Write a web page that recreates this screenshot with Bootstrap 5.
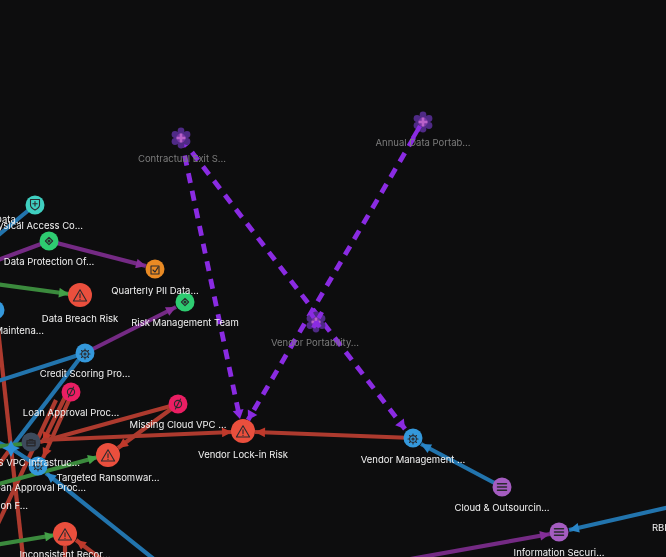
<!doctype html>
<html lang="en">
<head>
<meta charset="utf-8">
<title>Graph</title>
<link href="https://cdn.jsdelivr.net/npm/bootstrap@5.3.0/dist/css/bootstrap.min.css" rel="stylesheet">
<style>
html,body{height:100%;margin:0;background:#0d0d0e;overflow:hidden}
.graph-canvas{display:block;width:666px;height:557px;filter:blur(.5px)}
.graph-canvas text{font-family:Inter,"Liberation Sans",sans-serif;font-size:9.5px;font-weight:400;fill:#f2f2f2;text-anchor:middle}
.graph-canvas text.lab-dim{fill:#7c7c7c}
.graph-canvas text.lab-start{text-anchor:start}
.graph-canvas text.lab-end{text-anchor:end}
.ed{fill:none;stroke-width:4.2}
.ed-red{stroke:#ad3a2e}
.ed-blue{stroke:#2274ad}
.ed-green{stroke:#3b8a3d}
.ed-pur{stroke:#742a84}
.ed-dash{stroke:#8a2be2;stroke-width:4.8;stroke-dasharray:10 8}
.ico{fill:none;stroke:#2a2a2e;stroke-width:1.1;stroke-linejoin:round;stroke-linecap:round}
.n-red{fill:#ea4f3d}.n-blue{fill:#3498db}.n-pur{fill:#a45cc0}.n-pink{fill:#ea1e63}
.n-org{fill:#e98a24}.n-grn{fill:#2ecc71}.n-teal{fill:#3fcfc0}.n-dark{fill:#3d4a5c}
</style>
</head>
<body>
<main class="d-flex w-100 h-100 overflow-hidden">
<svg class="graph-canvas flex-shrink-0" viewBox="0 0 666 557" role="img" aria-label="Risk graph">
<defs>
<marker id="a-red" markerUnits="userSpaceOnUse" markerWidth="12" markerHeight="10" refX="11" refY="5" orient="auto"><path d="M1 .2 11 5 1 9.8z" fill="#c0392b"/></marker>
<marker id="a-blue" markerUnits="userSpaceOnUse" markerWidth="12" markerHeight="10" refX="11" refY="5" orient="auto"><path d="M1 .2 11 5 1 9.8z" fill="#2a86c8"/></marker>
<marker id="a-green" markerUnits="userSpaceOnUse" markerWidth="12" markerHeight="10" refX="11" refY="5" orient="auto"><path d="M1 .2 11 5 1 9.8z" fill="#43a047"/></marker>
<marker id="a-pur" markerUnits="userSpaceOnUse" markerWidth="12" markerHeight="10" refX="11" refY="5" orient="auto"><path d="M1 .2 11 5 1 9.8z" fill="#842e98"/></marker>
<marker id="a-dash" markerUnits="userSpaceOnUse" markerWidth="11" markerHeight="12" refX="10" refY="6" orient="auto"><path d="M1 .5 10 6 1 11.5z" fill="#8a2be2"/></marker>
<g id="i-warn" class="ico"><path d="M0-6.2 6.6 5H-6.6z"/><path d="M0-2.2V1.6M0 3.2V3.4"/></g>
<g id="i-gear" class="ico"><circle r="3.4"/><circle r="1"/><path d="M0-5V-3.6M0 5V3.6M-5 0H-3.6M5 0H3.6M-3.5-3.5-2.5-2.5M3.5-3.5 2.5-2.5M-3.5 3.5-2.5 2.5M3.5 3.5 2.5 2.5"/></g>
<g id="i-list" class="ico" style="stroke-width:1.5"><path d="M-4.5-3.2H4.5M-4.5 0H4.5M-4.5 3.2H4.5"/></g>
<g id="i-dia" class="ico"><path d="M0-3.6 3.6 0 0 3.6-3.6 0z" fill="none"/><circle r="1" fill="#2a2a2e"/></g>
<g id="i-chk" class="ico"><rect x="-4" y="-4" width="8" height="8"/><path d="M-2 0 0 2 3-2.6"/></g>
<g id="i-shield" class="ico"><path d="M-4.5-4.5H4.5V1C4.5 3.5 2 5 0 6-2 5-4.5 3.5-4.5 1z"/><path d="M0-2.5V2M-2.2-.3H2.2"/></g>
<g id="i-null" class="ico"><circle r="3.6"/><path d="M-2.6 5 2.6-5"/></g>
<g id="i-case" class="ico" style="stroke-width:1.4"><rect x="-4" y="-2.2" width="8" height="5"/><path d="M-1.5-2.2V-3.4H1.5V-2.2M-4 0H4"/></g>
<g id="i-flower">
<g fill="#4f2a86"><circle cy="-7" r="3.4"/><circle cx="6" cy="-3.5" r="3.4"/><circle cx="6" cy="3.5" r="3.4"/><circle cy="7" r="3.4"/><circle cx="-6" cy="3.5" r="3.4"/><circle cx="-6" cy="-3.5" r="3.4"/><circle r="7"/></g>
<circle r="4.5" fill="#8f3fb8" opacity=".6"/>
<path d="M0-4.5V4.5M-4.5 0H4.5" stroke="#c56ad0" stroke-width="2.6" opacity=".85"/>
</g>
</defs>

<!-- edges -->
<path class="ed ed-blue" d="M-5 238 30 209"/>
<path class="ed ed-pur" d="M-5 261 49 241"/>
<path class="ed ed-pur" d="M49 241 146 266" marker-end="url(#a-pur)"/>
<path class="ed ed-green" d="M-5 284 69 294" marker-end="url(#a-green)"/>
<path class="ed ed-red" d="M-3 320 23 557"/>
<path class="ed ed-blue" d="M85 353-5 382"/>
<path class="ed ed-pur" d="M85 353 176 307" marker-end="url(#a-pur)"/>
<path class="ed ed-blue" d="M80 358 11 448"/>
<path class="ed ed-red" d="M66 395 43 442" marker-end="url(#a-red)"/>
<path class="ed ed-red" d="M70 398 43 458" marker-end="url(#a-red)"/>
<path class="ed ed-red" d="M56 400-5 530"/>
<path class="ed ed-red" d="M178 404 40 442" marker-end="url(#a-red)"/>
<path class="ed ed-red" d="M178 404 118 448" marker-end="url(#a-red)"/>
<path class="ed ed-red" d="M42 440 232 432" marker-end="url(#a-red)"/>
<path class="ed ed-red" d="M413 438 255 432" marker-end="url(#a-red)"/>
<path class="ed ed-blue" d="M155 560 46 473" marker-end="url(#a-blue)"/>
<path class="ed ed-green" d="M-5 485 98 457" marker-end="url(#a-green)"/>
<path class="ed ed-green" d="M-5 545 55 535" marker-end="url(#a-green)"/>
<path class="ed ed-red" d="M105 562 76 540" marker-end="url(#a-red)"/>
<path class="ed ed-red" d="M65 560V546"/>
<path class="ed ed-blue" d="M-5 441 12 449 38 466"/>
<path class="ed ed-green" d="M-5 447 22 444"/>
<path class="ed ed-red" d="M-5 470 11 448"/>
<path d="M11 440 14 446 20 448 14 451 11 457 8 451 2 448 8 446z" fill="#2f8fd6"/>
<path class="ed ed-blue" d="M502 487 421 444" marker-end="url(#a-blue)"/>
<path class="ed ed-blue" d="M670 507 569 530" marker-end="url(#a-blue)"/>
<path class="ed ed-pur" d="M405 560 550 534" marker-end="url(#a-pur)"/>
<path class="ed ed-dash" d="M181 138 240 419" marker-end="url(#a-dash)"/>
<path class="ed ed-dash" d="M423 122 248 420" marker-end="url(#a-dash)"/>
<path class="ed ed-dash" d="M181 138 405 429" marker-end="url(#a-dash)"/>

<!-- nodes -->
<use href="#i-flower" x="181" y="138"/>
<use href="#i-flower" x="423" y="122"/>
<use href="#i-flower" x="316" y="322"/>
<path d="M310 312 321 329M322 312 312 330" stroke="#8a2be2" stroke-width="4.4" stroke-dasharray="7 4" fill="none"/>
<path d="M420 126 413 138" stroke="#8a2be2" stroke-width="4.4" fill="none"/>

<circle class="n-teal" cx="35" cy="205" r="9.5"/><use href="#i-shield" x="35" y="204"/>
<circle class="n-grn" cx="49" cy="241" r="9.5"/><use href="#i-dia" x="49" y="241"/>
<circle class="n-org" cx="155" cy="269" r="9.5"/><use href="#i-chk" x="155" y="270"/>
<circle class="n-grn" cx="185" cy="302" r="9.5"/><use href="#i-dia" x="185" y="302"/>
<circle class="n-red" cx="80" cy="295" r="12"/><use href="#i-warn" x="80" y="296"/>
<circle class="n-blue" cx="-5" cy="310" r="9.5"/>
<circle class="n-blue" cx="85" cy="353" r="9.5"/><use href="#i-gear" x="85" y="354"/>
<circle class="n-pink" cx="71" cy="392" r="9.5"/><use href="#i-null" x="71" y="392"/>
<circle class="n-pink" cx="178" cy="404" r="9.5"/><use href="#i-null" x="178" y="404"/>
<circle class="n-dark" cx="31" cy="442" r="9.5"/><use href="#i-case" x="31" y="443"/>
<circle class="n-blue" cx="38" cy="466" r="9.5"/><use href="#i-gear" x="38" y="466"/>
<circle class="n-red" cx="108" cy="455" r="12"/><use href="#i-warn" x="108" y="456"/>
<circle class="n-red" cx="65" cy="534" r="12"/><use href="#i-warn" x="65" y="535"/>
<circle class="n-red" cx="243" cy="431" r="12"/><use href="#i-warn" x="243" y="432"/>
<circle class="n-blue" cx="413" cy="438" r="9.5"/><use href="#i-gear" x="413" y="439"/>
<circle class="n-pur" cx="502" cy="487" r="9.5"/><use href="#i-list" x="502" y="487"/>
<circle class="n-pur" cx="559" cy="532" r="9.5"/><use href="#i-list" x="559" y="532"/>

<!-- labels -->
<text class="lab-dim" x="182" y="162">Contractual Exit S...</text>
<text class="lab-dim" x="423" y="146">Annual Data Portab...</text>
<text class="lab-dim" x="315" y="346">Vendor Portability...</text>
<text class="lab-end" x="24" y="223">Data...</text>
<text class="lab-end" x="83" y="229">Physical Access Co...</text>
<text x="49" y="265">Data Protection Of...</text>
<text x="155" y="294">Quarterly PII Data...</text>
<text x="80" y="322">Data Breach Risk</text>
<text x="185" y="326">Risk Management Team</text>
<text class="lab-end" x="44" y="334">Maintena...</text>
<text x="85" y="377">Credit Scoring Pro...</text>
<text x="71" y="416">Loan Approval Proc...</text>
<text x="178" y="428">Missing Cloud VPC ...</text>
<text x="243" y="458">Vendor Lock-in Risk</text>
<text x="413" y="463">Vendor Management ...</text>
<text x="502" y="511">Cloud &amp; Outsourcin...</text>
<text x="559" y="556">Information Securi...</text>
<text class="lab-start" x="652" y="531">RBI</text>
<text class="lab-end" x="80" y="466">AWS VPC Infrastruc...</text>
<text x="108" y="481">Targeted Ransomwar...</text>
<text class="lab-end" x="86" y="491">Loan Approval Proc...</text>
<text class="lab-end" x="28" y="509">Action F...</text>
<text x="65" y="558">Inconsistent Recor...</text>
</svg>
</main>
<script src="https://cdn.jsdelivr.net/npm/bootstrap@5.3.0/dist/js/bootstrap.bundle.min.js"></script>
</body>
</html>
